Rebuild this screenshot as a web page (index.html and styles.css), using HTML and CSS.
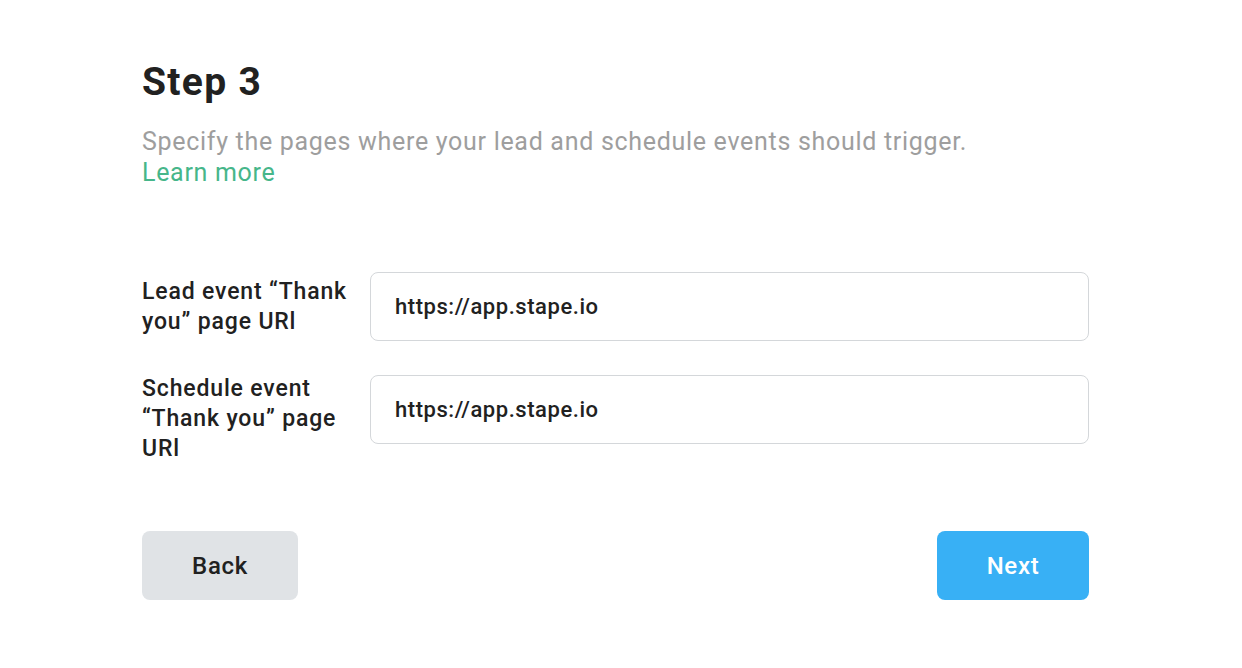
FILE: index.html
```html
<!DOCTYPE html>
<html lang="en">
<head>
<meta charset="utf-8">
<title>Step 3</title>
<link rel="stylesheet" href="styles.css">
</head>
<body>
<main class="wizard">
  <h1 class="title">Step 3</h1>
  <p class="subtitle">Specify the pages where your lead and schedule events should trigger.<br><a class="link" href="#">Learn more</a></p>
  <div class="fields">
    <div class="row row-first">
      <label class="label" for="lead">Lead event “Thank you” page URl</label>
      <input class="input" id="lead" type="text" value="https://app.stape.io">
    </div>
    <div class="row row-second">
      <label class="label" for="schedule">Schedule event “Thank you” page URl</label>
      <input class="input" id="schedule" type="text" value="https://app.stape.io">
    </div>
  </div>
  <div class="actions">
    <button class="btn btn-back" type="button">Back</button>
    <button class="btn btn-next" type="button">Next</button>
  </div>
</main>
</body>
</html>
```
FILE: styles.css
```css
html, body {
  margin: 0;
  padding: 0;
  background: #ffffff;
}
body {
  font-family: Roboto, "Liberation Sans", Arial, sans-serif;
  color: #212121;
}
.wizard {
  width: 947px;
  margin-left: 142px;
  padding-top: 60px;
}
.title {
  margin: 0;
  font-size: 39px;
  line-height: 44px;
  font-weight: 700;
  letter-spacing: 1.3px;
  color: #212121;
}
.subtitle {
  margin: 22px 0 0;
  font-size: 25px;
  line-height: 31px;
  letter-spacing: 0.7px;
  color: #9e9e9e;
}
.link {
  color: #46b68a;
  text-decoration: none;
}
.fields {
  margin-top: 84px;
  display: flex;
  flex-direction: column;
  gap: 33px;
}
.row {
  display: flex;
  align-items: flex-start;
  gap: 18px;
}
.label {
  width: 210px;
  flex: none;
  font-size: 23px;
  line-height: 30px;
  font-weight: 500;
  letter-spacing: 0.85px;
  color: #212121;
}
.row-first .label {
  padding-top: 5px;
}
.row-second .input {
  margin-top: 1px;
}
.input {
  flex: 1;
  box-sizing: border-box;
  height: 69px;
  border: 1px solid #d4d7da;
  border-radius: 8px;
  padding: 0 24px;
  font-family: Roboto, "Liberation Sans", Arial, sans-serif;
  font-size: 22px;
  font-weight: 500;
  letter-spacing: 0.55px;
  color: #212121;
  background: #ffffff;
  outline: none;
}
.actions {
  margin-top: 67px;
  display: flex;
  justify-content: space-between;
}
.btn {
  height: 69px;
  border: none;
  border-radius: 8px;
  font-family: Roboto, "Liberation Sans", Arial, sans-serif;
  font-size: 24px;
  font-weight: 500;
  letter-spacing: 0.7px;
  cursor: pointer;
}
.btn-back {
  width: 156px;
  background: #e0e3e6;
  color: #212121;
}
.btn-next {
  width: 152px;
  background: #38b0f5;
  color: #ffffff;
}
```
